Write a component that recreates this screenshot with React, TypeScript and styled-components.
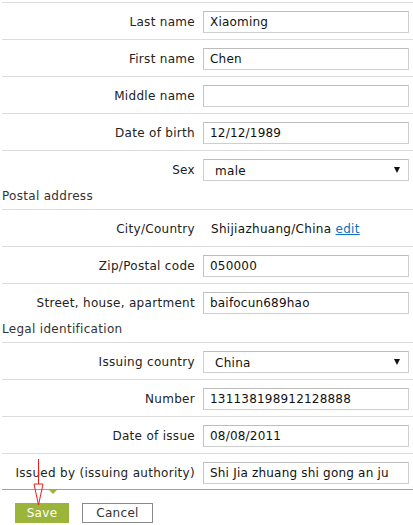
import React from "react";
import styled, { createGlobalStyle } from "styled-components";

const GlobalStyle = createGlobalStyle`
  html, body {
    margin: 0;
    padding: 0;
    background: #ffffff;
  }
  body {
    font-family: "DejaVu Sans", Verdana, sans-serif;
    font-size: 12px;
    letter-spacing: 0.3px;
    color: #222222;
  }
`;

const Page = styled.div`
  position: relative;
  width: 411px;
  height: 523px;
  padding: 2px 0 0 2px;
  overflow: hidden;
`;

const Form = styled.form`
  display: flex;
  flex-direction: column;
`;

const Row = styled.div<{ last?: boolean }>`
  box-sizing: border-box;
  display: grid;
  grid-template-columns: 193px 206px;
  column-gap: 8px;
  align-items: center;
  height: 37px;
  padding-top: 2px;
  border-top: 1px solid #dcdcdc;
  border-bottom: ${(p) => (p.last ? "1px solid #9bb53a" : "none")};
`;

const Label = styled.label`
  text-align: right;
  white-space: nowrap;
  color: #222222;
`;

const TextInput = styled.input`
  box-sizing: border-box;
  width: 206px;
  height: 22px;
  margin: 0;
  padding: 0 6px;
  border: 1px solid #cfcfcf;
  border-top-color: #bdbdbd;
  border-left-color: #c4c4c4;
  font: inherit;
  letter-spacing: 0.2px;
  color: #111111;
  background: #ffffff;
  outline: none;
`;

const SelectBox = styled.div`
  box-sizing: border-box;
  display: flex;
  align-items: center;
  justify-content: space-between;
  width: 206px;
  height: 22px;
  padding: 2px 8px 0 11px;
  border: 1px solid #cfcfcf;
  border-top-color: #bdbdbd;
  color: #111111;
`;

const Caret = styled.span`
  width: 0;
  height: 0;
  border-left: 3px solid transparent;
  border-right: 3px solid transparent;
  border-top: 6px solid #111111;
  margin-bottom: 2px;
`;

const Value = styled.div`
  padding-left: 8px;
  white-space: nowrap;
  color: #111111;
`;

const EditLink = styled.a`
  color: #0b6fc2;
  text-decoration: underline;
`;

const SectionTitle = styled.div`
  height: 22px;
  line-height: 18px;
  color: #333333;
`;

const Footer = styled.div`
  position: relative;
  display: flex;
  gap: 13px;
  padding: 13px 0 0 13px;
`;

const Notch = styled.span`
  position: absolute;
  top: 0;
  left: 47px;
  width: 0;
  height: 0;
  border-left: 4px solid transparent;
  border-right: 4px solid transparent;
  border-top: 4px solid #9bb53a;
`;

const Button = styled.button<{ primary?: boolean }>`
  box-sizing: border-box;
  height: 20px;
  width: ${(p) => (p.primary ? "54px" : "71px")};
  margin: 0;
  padding: 0;
  font: inherit;
  letter-spacing: 0.3px;
  border: 1px solid ${(p) => (p.primary ? "#9bb53a" : "#8a8a8a")};
  background: ${(p) => (p.primary ? "#9bb53a" : "#ffffff")};
  color: ${(p) => (p.primary ? "#ffffff" : "#333333")};
`;

const Arrow = styled.svg`
  position: absolute;
  left: 32px;
  top: 459px;
`;

type Field = { label: string; value?: string; kind?: "input" | "select" };

const personal: Field[] = [
  { label: "Last name", value: "Xiaoming" },
  { label: "First name", value: "Chen" },
  { label: "Middle name", value: "" },
  { label: "Date of birth", value: "12/12/1989" },
  { label: "Sex", value: "male", kind: "select" },
];

const legal: Field[] = [
  { label: "Issuing country", value: "China", kind: "select" },
  { label: "Number", value: "131138198912128888" },
  { label: "Date of issue", value: "08/08/2011" },
  { label: "Issued by (issuing authority)", value: "Shi Jia zhuang shi gong an ju" },
];

function FieldRow({ field, last }: { field: Field; last?: boolean }) {
  return (
    <Row last={last}>
      <Label>{field.label}</Label>
      {field.kind === "select" ? (
        <SelectBox>
          <span>{field.value}</span>
          <Caret />
        </SelectBox>
      ) : (
        <TextInput defaultValue={field.value} />
      )}
    </Row>
  );
}

export default function App() {
  return (
    <Page>
      <GlobalStyle />
      <Form onSubmit={(e) => e.preventDefault()}>
        {personal.map((f) => (
          <FieldRow key={f.label} field={f} />
        ))}
        <SectionTitle>Postal address</SectionTitle>
        <Row>
          <Label>City/Country</Label>
          <Value>
            Shijiazhuang/China <EditLink href="#">edit</EditLink>
          </Value>
        </Row>
        <FieldRow field={{ label: "Zip/Postal code", value: "050000" }} />
        <FieldRow field={{ label: "Street, house, apartment", value: "baifocun689hao" }} />
        <SectionTitle>Legal identification</SectionTitle>
        {legal.map((f, i) => (
          <FieldRow key={f.label} field={f} last={i === legal.length - 1} />
        ))}
        <Footer>
          <Notch />
          <Button primary type="submit">Save</Button>
          <Button type="button">Cancel</Button>
        </Footer>
      </Form>
      <Arrow width="14" height="50" viewBox="0 0 14 50">
        <line x1="6.5" y1="0" x2="6.5" y2="25" stroke="#ee1c1c" strokeWidth="1" />
        <polygon points="2,25 11,25 6.5,46" fill="none" stroke="#ee1c1c" strokeWidth="1" />
      </Arrow>
    </Page>
  );
}
